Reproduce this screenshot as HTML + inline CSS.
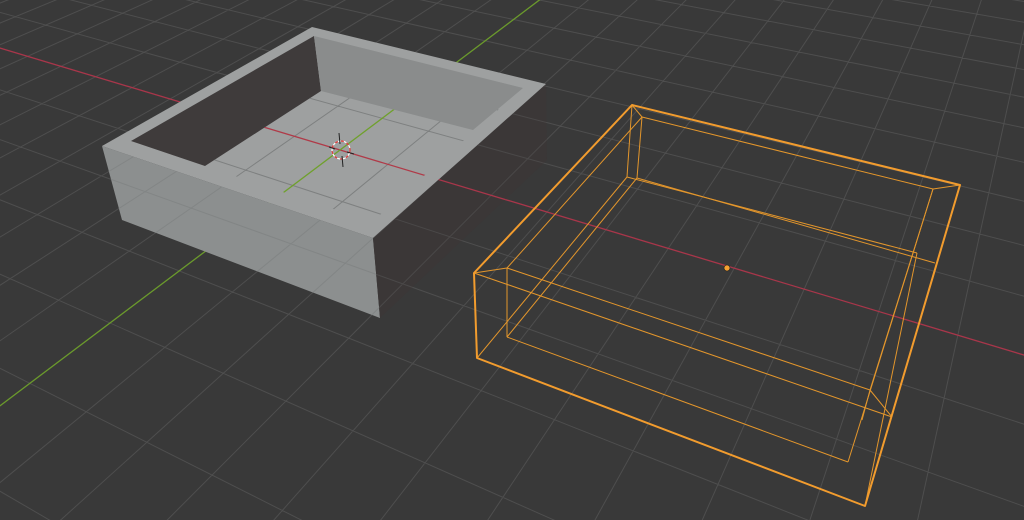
<!DOCTYPE html>
<html><head><meta charset="utf-8"><style>
html,body{margin:0;padding:0;background:#393939;overflow:hidden;width:1024px;height:520px}
svg{display:block;position:absolute;left:0;top:0}
</style></head><body>
<svg id="s" width="1024" height="520" viewBox="0 0 1024 520" xmlns="http://www.w3.org/2000/svg">
<defs>
<clipPath id="floor"><polygon points="205,166 321,91 473,130 523,88 372,222"/></clipPath>
<clipPath id="rface"><polygon points="373,238 546,84 547,160 380,318"/></clipPath>
<clipPath id="fface"><polygon points="102,146 373,238 380,318 122,220"/></clipPath>
</defs>
<rect width="1024" height="520" fill="#393939"/>
<path id="g1" fill="none" stroke="#4e4e4e" stroke-width="1"/>
<path id="r1" fill="none" stroke="#a8364a" stroke-width="1.3"/>
<path id="gr1" fill="none" stroke="#6b9a2c" stroke-width="1.3"/>
<!-- left box -->
<polygon points="102,146 373,238 380,318 122,220" fill="#8c8f8f"/>
<polygon points="373,238 546,84 547,160 380,318" fill="#3b3737"/>
<polygon points="102,146 312,27 546,84 373,238" fill="#9ea0a0"/>
<polygon points="131,141 314,36 321,91 205,166" fill="#3f3b3b"/>
<polygon points="314,36 523,88 473,130 321,91" fill="#8a8c8c"/>
<path id="g2" fill="none" stroke="#7e8080" stroke-width="1" clip-path="url(#floor)"/>
<path id="g3" fill="none" stroke="#4a4848" stroke-width="1" clip-path="url(#rface)"/>
<path id="g4" fill="none" stroke="#7c7e7e" stroke-width="1" opacity="0.6" clip-path="url(#fface)"/>
<path id="r2" fill="none" stroke="#b03a48" stroke-width="1.3" clip-path="url(#floor)"/>
<path id="r3" fill="none" stroke="#a8364a" stroke-width="1.3" clip-path="url(#rface)"/>
<path id="gr2" fill="none" stroke="#6fa02c" stroke-width="1.3" clip-path="url(#floor)"/>
<g>
<circle cx="341" cy="150" r="9" fill="none" stroke="#fff" stroke-width="1.2"/>
<circle cx="341" cy="150" r="9" fill="none" stroke="#d33" stroke-width="1.2" stroke-dasharray="3 3"/>
<line x1="339" y1="133" x2="340" y2="144" stroke="#222" stroke-width="1"/>
<line x1="342" y1="156" x2="343" y2="167" stroke="#222" stroke-width="1"/>
<line x1="329" y1="147" x2="335" y2="149" stroke="#222" stroke-width="1"/>
<line x1="347" y1="152" x2="354" y2="154" stroke="#222" stroke-width="1"/>
</g>
<!-- orange wireframe -->
<g fill="none" stroke="#e3962c" stroke-width="1" stroke-linejoin="round">
<polyline points="474,273 892,417"/>
<line x1="632" y1="105" x2="642" y2="117"/>
<line x1="960" y1="185" x2="933" y2="189"/>
<line x1="474" y1="273" x2="507" y2="268"/>
<line x1="892" y1="417" x2="870" y2="390"/>
<polygon points="642,117 933,189 870,390 507,268"/>
<line x1="632" y1="105" x2="627" y2="177"/>
<line x1="642" y1="117" x2="637" y2="178"/>
<line x1="627" y1="177" x2="477" y2="358"/>
<line x1="637" y1="178" x2="507" y2="337"/>
<line x1="507" y1="268" x2="507" y2="337"/>
<line x1="507" y1="337" x2="848" y2="462"/>
<line x1="933" y1="189" x2="848" y2="462"/>
<line x1="870" y1="390" x2="862" y2="420"/>
<line x1="637" y1="178" x2="935" y2="263"/>
<line x1="627" y1="177" x2="917" y2="253"/>
<line x1="917" y1="253" x2="865" y2="506"/>
</g>
<polygon points="632,105 960,185 865,506 477,358 474,273" fill="none" stroke="#f29c2e" stroke-width="2" stroke-linejoin="round"/>
<circle cx="727" cy="268" r="3" fill="#f5a030" stroke="#222" stroke-width="0.6"/>
</svg>
<script>
(function(){
var h=[38.38,63.72,340,10.334,-24.99,150,-0.02443,0.05654];
function W(u,v){return h[6]*u+h[7]*v+1;}
function P(u,v){var w=W(u,v);return [(h[0]*u+h[1]*v+h[2])/w,(h[3]*u+h[4]*v+h[5])/w];}
var eps=0.05;
function seg(u0,v0,u1,v1){var w0=W(u0,v0),w1=W(u1,v1);
if(w0<eps&&w1<eps)return "";
if(w0<eps){var t=(eps-w0)/(w1-w0);u0=u0+(u1-u0)*t;v0=v0+(v1-v0)*t;}
else if(w1<eps){var t=(eps-w1)/(w0-w1);u1=u1+(u0-u1)*t;v1=v1+(v0-v1)*t;}
var a=P(u0,v0),c=P(u1,v1);
return "M"+a[0].toFixed(1)+" "+a[1].toFixed(1)+"L"+c[0].toFixed(1)+" "+c[1].toFixed(1);}
var R=80,d="";
for(var k=-R;k<=R;k++){if(k!=0){d+=seg(k,-R,k,R);d+=seg(-R,k,R,k);}}
var red=seg(-R,0,R,0),grn=seg(0,-R,0,R);
['g1','g2','g3','g4'].forEach(function(i){document.getElementById(i).setAttribute('d',d);});
['r1','r2','r3'].forEach(function(i){document.getElementById(i).setAttribute('d',red);});
['gr1','gr2'].forEach(function(i){document.getElementById(i).setAttribute('d',grn);});
})();
</script>
</body></html>
